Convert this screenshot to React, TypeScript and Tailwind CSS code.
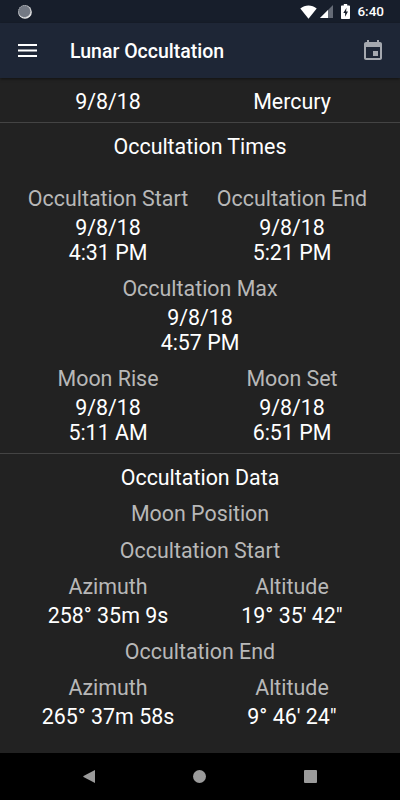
import type { ReactNode } from "react";

export default function App() {
  return (
    <div className="flex h-[800px] w-[400px] flex-col overflow-hidden bg-[#222222] font-['Roboto',sans-serif] text-[21.4px] leading-[25px] text-white">
      <StatusBar />
      <AppBar />
      <main className="flex-1">
        <section className="h-[45px] border-b border-[#444444] px-4 pt-[11px]">
          <Columns>
            <Value>9/8/18</Value>
            <Value>Mercury</Value>
          </Columns>
        </section>
        <section className="h-[331px] border-b border-[#444444] px-4 pt-[11px]">
          <Heading>Occultation Times</Heading>
          <div className="mt-[27px] flex flex-col gap-[11px]">
            <Columns>
              <Field label="Occultation Start" lines={["9/8/18", "4:31 PM"]} />
              <Field label="Occultation End" lines={["9/8/18", "5:21 PM"]} />
            </Columns>
            <Field label="Occultation Max" lines={["9/8/18", "4:57 PM"]} />
            <Columns>
              <Field label="Moon Rise" lines={["9/8/18", "5:11 AM"]} />
              <Field label="Moon Set" lines={["9/8/18", "6:51 PM"]} />
            </Columns>
          </div>
        </section>
        <section className="flex flex-col gap-[11.3px] px-4 pt-[11px]">
          <Heading>Occultation Data</Heading>
          <Label>Moon Position</Label>
          <Label>Occultation Start</Label>
          <Columns>
            <Field label="Azimuth" lines={["258° 35m 9s"]} />
            <Field label="Altitude" lines={["19° 35' 42\""]} />
          </Columns>
          <Label>Occultation End</Label>
          <Columns>
            <Field label="Azimuth" lines={["265° 37m 58s"]} />
            <Field label="Altitude" lines={["9° 46' 24\""]} />
          </Columns>
        </section>
      </main>
      <NavigationBar />
    </div>
  );
}

function Columns({ children }: { children: ReactNode }) {
  return <div className="grid grid-cols-2">{children}</div>;
}

function Heading({ children }: { children: ReactNode }) {
  return <h2 className="text-center">{children}</h2>;
}

function Label({ children }: { children: ReactNode }) {
  return <p className="text-center text-[#b8b8b8]">{children}</p>;
}

function Value({ children }: { children: ReactNode }) {
  return <p className="text-center">{children}</p>;
}

function Field({ label, lines }: { label: string; lines: string[] }) {
  return (
    <div>
      <Label>{label}</Label>
      <div className="mt-1">
        {lines.map((line) => (
          <Value key={line}>{line}</Value>
        ))}
      </div>
    </div>
  );
}

function StatusBar() {
  return (
    <div className="flex h-[23px] shrink-0 items-center bg-[#171e2b] pr-[16px] pl-[18px]">
      <svg className="size-[14px]" viewBox="0 0 14 14">
        <circle cx="7" cy="7" r="6.8" fill="#eeeeee" />
        <circle cx="6.4" cy="6.3" r="6" fill="#737984" />
        <circle
          cx="6.6"
          cy="6.5"
          r="6"
          fill="none"
          stroke="#a8abb1"
          strokeDasharray="1 1"
        />
      </svg>
      <svg className="ml-auto h-[14px] w-[17px]" viewBox="0 0 17 14">
        <path d="M0.3 3.5C5-.5 12-.5 16.700 3.500L8.500 13.700Z" fill="#fff" />
      </svg>
      <svg className="ml-[3px] size-[13px]" viewBox="0 0 13 13">
        <path d="M13 0V13H0Z" fill="#656b76" />
        <path d="M8 5V13H0Z" fill="#fff" />
      </svg>
      <svg className="ml-[8px] h-[15px] w-[9px]" viewBox="0 0 9 15">
        <path
          d="M2.800 0H6.200V1.500H8.200Q9 1.500 9 2.300V14.200Q9 15 8.200 15H.8Q0 15 0 14.200V2.300Q0 1.500 .8 1.500H2.800Z"
          fill="#fff"
        />
        <path d="M5.500 3.800L2.300 9H4.100V12.700L7 7.600H5.100Z" fill="#171e2b" />
      </svg>
      <span className="mt-px ml-[7px] text-[13.5px] leading-none font-medium">
        6:40
      </span>
    </div>
  );
}

function AppBar() {
  return (
    <header className="flex h-[55px] shrink-0 items-center bg-[#1e2636] pr-[18px] pl-[18px] shadow-[0_1px_3px_rgba(0,0,0,0.5)]">
      <svg className="h-[13px] w-[19px]" viewBox="0 0 19 13">
        <path d="M0 0H19V2H0ZM0 5.500H19V7.500H0ZM0 11H19V13H0Z" fill="#fff" />
      </svg>
      <h1 className="mt-[3px] ml-[33px] text-[19.5px] leading-none font-medium">
        Lunar Occultation
      </h1>
      <svg className="mb-px ml-auto h-[20px] w-[18px]" viewBox="3 1 18 20">
        <path
          d="M17 12h-5v5h5v-5zM16 1v2H8V1H6v2H5c-1.110 0-1.990.9-1.990 2L3 19c0 1.100.89 2 2 2h14c1.100 0 2-.9 2-2V5c0-1.100-.9-2-2-2h-1V1h-2zm3 18H5V8h14v11z"
          fill="#a5a8af"
        />
      </svg>
    </header>
  );
}

function NavigationBar() {
  return (
    <nav className="flex h-[47px] shrink-0 items-center justify-between bg-black pr-[83px] pl-[83px]">
      <svg className="h-[13px] w-[12px]" viewBox="0 0 12 13">
        <path d="M12 0V13L.5 7Q0 6.500 .5 6Z" fill="#9b9b9b" />
      </svg>
      <span className="size-[13px] rounded-full bg-[#9b9b9b]" />
      <span className="size-[13px] rounded-[1px] bg-[#9b9b9b]" />
    </nav>
  );
}
